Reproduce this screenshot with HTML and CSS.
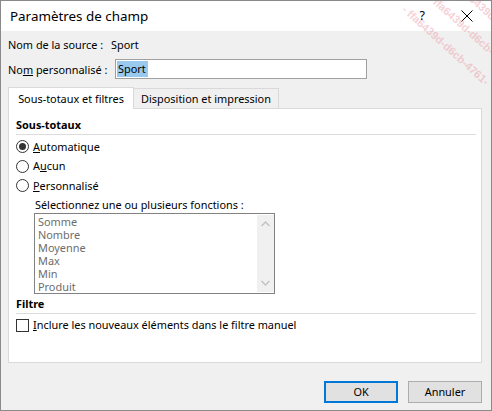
FILE: index.html
```html
<!DOCTYPE html>
<html lang="fr">
<head>
<meta charset="utf-8">
<title>Paramètres de champ</title>
<link rel="stylesheet" href="styles.css">
</head>
<body>
<div class="dialog">
  <div class="titlebar">
    <span class="title">Paramètres de champ</span>
    <span class="help">?</span>
    <svg class="close" width="12" height="12" viewBox="0 0 12 12"><path d="M0.5 0.5 L11.5 11.5 M11.5 0.5 L0.5 11.5" stroke="#000" stroke-width="1" fill="none"/></svg>
  </div>
  <div class="content">
    <div class="row source">
      <span class="lbl lbl-source">Nom de la source :</span>
      <span>Sport</span>
    </div>
    <div class="row custom">
      <span class="lbl lbl-custom">No<u>m</u> personnalisé :</span>
      <div class="input"><span class="sel">Sport</span></div>
    </div>
    <div class="tabs">
      <div class="tab active">Sous-totaux et filtres</div>
      <div class="tab">Disposition et impression</div>
    </div>
    <div class="panel">
      <div class="heading">Sous-totaux</div>
      <div class="sep"></div>
      <div class="opt opt-first"><span class="radio checked"></span><span><u>A</u>utomatique</span></div>
      <div class="opt"><span class="radio"></span><span>A<u>u</u>cun</span></div>
      <div class="opt"><span class="radio"></span><span><u>P</u>ersonnalisé</span></div>
      <div class="hint">Sélectionnez une ou plusieurs fonctions :</div>
      <div class="listbox">
        <ul class="items">
          <li>Somme</li>
          <li>Nombre</li>
          <li>Moyenne</li>
          <li>Max</li>
          <li>Min</li>
          <li>Produit</li>
        </ul>
        <div class="scroll">
          <svg width="9" height="6" viewBox="0 0 9 6"><path d="M0.5 5 L4.5 1 L8.5 5" stroke="#c2c2c2" stroke-width="1.4" fill="none"/></svg>
          <svg width="9" height="6" viewBox="0 0 9 6"><path d="M0.5 1 L4.5 5 L8.5 1" stroke="#c2c2c2" stroke-width="1.4" fill="none"/></svg>
        </div>
      </div>
      <div class="heading heading-filter">Filtre</div>
      <div class="sep"></div>
      <div class="opt check-row"><span class="checkbox"></span><span><u>I</u>nclure les nouveaux éléments dans le filtre manuel</span></div>
    </div>
    <div class="buttons">
      <div class="btn default">OK</div>
      <div class="btn">Annuler</div>
    </div>
  </div>
  <div class="watermark">
    <span class="wm wm1">- ffa6439d-d6cb-4761-</span>
    <span class="wm wm2">- ffa6439d-d6cb-4761-</span>
    <span class="wm wm3">- ffa6439d-d6cb-4761-</span>
  </div>
</div>
</body>
</html>
```

FILE: styles.css
```css
* { box-sizing: border-box; }
html, body { margin: 0; padding: 0; }
body {
  font-family: "Noto Sans", "Open Sans", sans-serif;
  font-size: 10.9px;
  color: #000;
  background: #fff;
}
.dialog {
  position: relative;
  width: 492px;
  height: 411px;
  border: 1px solid #8a8a8a;
  background: #f0f0f0;
  overflow: hidden;
}
.titlebar {
  height: 30px;
  background: #fff;
  display: flex;
  align-items: center;
  padding-left: 9px;
}
.title {
  font-size: 13.4px;
  flex: 1;
  line-height: 20px;
}
.help {
  font-size: 12.5px;
  margin-right: 36px;
  line-height: 14px;
}
.close {
  margin-right: 18px;
}
.content {
  padding: 4px 9px 0 7px;
}
.row {
  display: flex;
  align-items: center;
}
.source { height: 18px; }
.custom { height: 20px; margin-top: 6px; }
.lbl-source { width: 103px; }
.lbl-custom { width: 107px; }
.input {
  width: 252px;
  height: 20px;
  background: #fff;
  border: 1px solid #a0a0a0;
  padding: 1px 1px;
  display: flex;
  align-items: center;
}
.sel {
  background: #99c9ef;
  padding: 0 2px 0 1px;
  line-height: 16px;
}
.tabs {
  display: flex;
  align-items: flex-end;
  margin-top: 8px;
  height: 21px;
  position: relative;
  z-index: 1;
}
.tab {
  height: 20px;
  padding: 0 6px;
  border: 1px solid #d9d9d9;
  border-bottom: none;
  background: #f0f0f0;
  display: flex;
  align-items: center;
  justify-content: center;
  line-height: 16px;
  white-space: nowrap;
}
.tab.active {
  height: 22px;
  background: #fff;
  width: 126px;
  margin-bottom: -1px;
}
.tab + .tab { border-left: none; width: 145px; }
.panel {
  background: #fff;
  border: 1px solid #d9d9d9;
  height: 255px;
  width: 474px;
  padding: 8px 5px 0 7px;
}
.heading {
  font-weight: bold;
  line-height: 16px;
  height: 16px;
}
.sep {
  height: 1px;
  background: #dcdcdc;
  margin-top: 1px;
}
.opt {
  display: flex;
  align-items: center;
  height: 19.5px;
  line-height: 16px;
}
.opt-first { margin-top: 2px; }
.radio {
  width: 13px;
  height: 13px;
  border: 1px solid #333;
  border-radius: 50%;
  margin-right: 4px;
  display: flex;
  align-items: center;
  justify-content: center;
  flex: none;
}
.radio.checked::after {
  content: "";
  width: 7px;
  height: 7px;
  border-radius: 50%;
  background: #333;
}
.hint {
  margin-left: 19px;
  height: 16px;
  line-height: 16px;
  margin-top: 1px;
}
.listbox {
  margin-left: 18px;
  width: 241px;
  height: 81px;
  border: 1px solid #828282;
  display: flex;
  background: #fff;
}
.items {
  list-style: none;
  margin: 0;
  padding: 1px 0 0 3px;
  flex: 1;
  color: #6d6d6d;
}
.items li {
  line-height: 13px;
  height: 13px;
}
.scroll {
  width: 17px;
  background: #f0f0f0;
  margin: 1px 0 1px 0;
  display: flex;
  flex-direction: column;
  justify-content: space-between;
  align-items: center;
  padding: 6px 0 6px;
}
.scroll svg { display: block; }
.heading-filter { margin-top: 2px; }
.check-row { margin-top: 1.5px; height: 20px; }
.checkbox {
  width: 13px;
  height: 13px;
  border: 1px solid #333;
  margin-right: 4px;
  flex: none;
}
.buttons {
  display: flex;
  justify-content: flex-end;
  gap: 10px;
  margin-top: 18px;
}
.btn {
  width: 74px;
  height: 22px;
  background: #e1e1e1;
  border: 1px solid #adadad;
  display: flex;
  align-items: center;
  justify-content: center;
  line-height: 16px;
}
.btn.default {
  border: 2px solid #0078d7;
}
.watermark {
  position: absolute;
  top: 0;
  right: 0;
  width: 95px;
  height: 100px;
  overflow: hidden;
  pointer-events: none;
}
.wm {
  position: absolute;
  white-space: nowrap;
  font-family: "Liberation Sans", sans-serif;
  font-size: 11px;
  font-weight: bold;
  color: rgba(232, 140, 150, 0.4);
  transform: rotate(42deg);
  transform-origin: left top;
}
.wm1 { left: 12px; top: 2px; }
.wm2 { left: 38px; top: -10px; }
.wm3 { left: 64px; top: -22px; }
```
